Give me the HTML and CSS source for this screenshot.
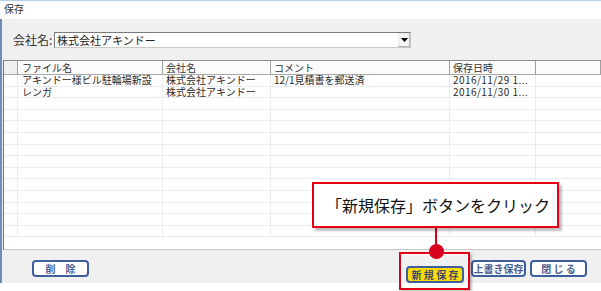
FILE: index.html
```html
<!DOCTYPE html>
<html lang="ja">
<head>
<meta charset="utf-8">
<link rel="stylesheet" href="styles.css">
</head>
<body>
<div class="titlebar">保存</div>
<div class="window">
  <div class="company">
    <span class="label">会社名:</span>
    <div class="combo">
      <span class="combo-text">株式会社アキンドー</span>
      <span class="combo-btn"><svg width="7" height="4" viewBox="0 0 7 4"><path d="M0 0H7L3.5 4Z" fill="#000"/></svg></span>
    </div>
  </div>
  <div class="grid">
    <div class="row head">
      <div class="c c0"></div><div class="c c1">ファイル名</div><div class="c c2">会社名</div><div class="c c3">コメント</div><div class="c c4">保存日時</div><div class="c c5"></div>
    </div>
    <div class="row"><div class="c c0"></div><div class="c c1">アキンドー様ビル駐輪場新設</div><div class="c c2">株式会社アキンドー</div><div class="c c3">12/1見積書を郵送済</div><div class="c c4 date">2016/11/29 1...</div><div class="c c5"></div></div>
    <div class="row"><div class="c c0"></div><div class="c c1">レンガ</div><div class="c c2">株式会社アキンドー</div><div class="c c3"></div><div class="c c4 date">2016/11/30 1...</div><div class="c c5"></div></div>
    <div class="row"><div class="c c0"></div><div class="c c1"></div><div class="c c2"></div><div class="c c3"></div><div class="c c4"></div><div class="c c5"></div></div>
    <div class="row"><div class="c c0"></div><div class="c c1"></div><div class="c c2"></div><div class="c c3"></div><div class="c c4"></div><div class="c c5"></div></div>
    <div class="row"><div class="c c0"></div><div class="c c1"></div><div class="c c2"></div><div class="c c3"></div><div class="c c4"></div><div class="c c5"></div></div>
    <div class="row"><div class="c c0"></div><div class="c c1"></div><div class="c c2"></div><div class="c c3"></div><div class="c c4"></div><div class="c c5"></div></div>
    <div class="row"><div class="c c0"></div><div class="c c1"></div><div class="c c2"></div><div class="c c3"></div><div class="c c4"></div><div class="c c5"></div></div>
    <div class="row"><div class="c c0"></div><div class="c c1"></div><div class="c c2"></div><div class="c c3"></div><div class="c c4"></div><div class="c c5"></div></div>
    <div class="row"><div class="c c0"></div><div class="c c1"></div><div class="c c2"></div><div class="c c3"></div><div class="c c4"></div><div class="c c5"></div></div>
    <div class="row"><div class="c c0"></div><div class="c c1"></div><div class="c c2"></div><div class="c c3"></div><div class="c c4"></div><div class="c c5"></div></div>
    <div class="row"><div class="c c0"></div><div class="c c1"></div><div class="c c2"></div><div class="c c3"></div><div class="c c4"></div><div class="c c5"></div></div>
    <div class="row"><div class="c c0"></div><div class="c c1"></div><div class="c c2"></div><div class="c c3"></div><div class="c c4"></div><div class="c c5"></div></div>
    <div class="row"><div class="c c0"></div><div class="c c1"></div><div class="c c2"></div><div class="c c3"></div><div class="c c4"></div><div class="c c5"></div></div>
    <div class="row"><div class="c c0"></div><div class="c c1"></div><div class="c c2"></div><div class="c c3"></div><div class="c c4"></div><div class="c c5"></div></div>
  </div>
  <div class="toolbar">
    <button class="btn btn-del">削　除</button>
    <div class="right">
      <div class="hl-wrap">
        <button class="btn btn-new">新 規 保 存</button>
        <span class="highlight"></span>
        <span class="connector"></span>
        <span class="dot"></span>
      </div>
      <button class="btn btn-over">上書き保存</button>
      <button class="btn btn-close">閉 じ る</button>
    </div>
  </div>
  <div class="callout">「新規保存」ボタンをクリック</div>
</div>
</body>
</html>
```
FILE: styles.css
```css
* { box-sizing: border-box; }
html, body { margin: 0; padding: 0; background: #fff; }
body {
  width: 601px; height: 291px; overflow: hidden;
  font-family: "Noto Sans CJK JP", "Noto Sans", sans-serif;
  color: #222;
}
.titlebar {
  height: 19px;
  border-top: 1px solid #b8d0ea;
  font-size: 10px;
  line-height: 16px;
  padding-left: 4px;
  color: #333;
  background: #fff;
}
.window {
  position: relative;
  height: 264px;
  background: #f0f0f0;
  border-left: 2px solid #6f8db5;
}
.company {
  display: flex;
  align-items: center;
  padding: 13px 0 0 11px;
  height: 29px;
}
.label {
  font-size: 12px;
  line-height: 16px;
  color: #333;
  width: 41px;
}
.combo {
  display: flex;
  width: 357px;
  height: 16px;
  background: #fff;
  border: 1px solid #7a7a7a;
  border-right-color: #c8c8c8;
  border-bottom-color: #c8c8c8;
}
.combo-text {
  flex: 1;
  font-size: 11px;
  line-height: 14px;
  padding-left: 2px;
  color: #222;
}
.combo-btn {
  width: 12px;
  height: 14px;
  display: flex;
  align-items: center;
  justify-content: center;
  background: #f4f4f4;
  border: 1px solid #b4b4b4;
  border-top-color: #e8e8e8;
  border-left-color: #e8e8e8;
}
.grid {
  margin: 12px 0 0 1px;
  height: 190px;
  background: #fff;
  border-top: 1px solid #8c8c8c;
  border-left: 1px solid #707070;
  border-bottom: 1px solid #c8c8c8;
}
.row {
  display: grid;
  grid-template-columns: 14px 145px 108px 179px 86px 1fr;
  height: 11.6px;
  border-bottom: 1px solid #ececec;
}
.row.head {
  height: 14px;
  border-bottom: 1px solid #a8a8a8;
  background: #fbfbfb;
}
.c {
  font-size: 10px;
  line-height: 10.6px;
  padding-left: 4px;
  white-space: nowrap;
  border-right: 1px solid #ececec;
  color: #2a2a2a;
}
.date { letter-spacing: 0.45px; }
.head .c {
  line-height: 13px;
  border-right: 1px solid #a0a0a0;
  color: #333;
}
.head .c0 { background: #f0f0f0; }
.c2, .c3, .c4 { padding-left: 3px; }
.c5 { border-right: none; }
.toolbar {
  display: flex;
  justify-content: space-between;
  padding: 10px 14px 0 30px;
}
.right {
  display: flex;
  gap: 4px;
}
.btn {
  height: 17px;
  margin: 0;
  padding: 0;
  font-family: "Noto Sans CJK JP", sans-serif;
  font-size: 10px;
  font-weight: 700;
  line-height: 13px;
  color: #4a6090;
  background: #fff;
  border: 2px solid #3d5f9e;
  border-radius: 4px;
}
.btn-del { width: 57px; }
.btn-new { width: 58px; background: #ffdc00; color: #3c4a70; }
.btn-over { width: 55px; letter-spacing: 0; }
.btn-close { width: 57px; }
.hl-wrap {
  position: relative;
  margin-right: 3px;
}
.highlight {
  position: absolute;
  left: -7px; top: -8px; right: -6px; bottom: -6px;
  border: 2px solid #e00018;
  box-shadow: inset 0 0 0 1px #fff, 2px 2px 2px rgba(0,0,0,0.25);
}
.connector {
  position: absolute;
  left: 29px; top: -32px;
  width: 2px; height: 24px;
  background: #d8001c;
}
.dot {
  position: absolute;
  left: 22.5px; top: -16.5px;
  width: 15px; height: 15px;
  border-radius: 50%;
  background: #d8001c;
}
.callout {
  position: absolute;
  left: 310px; top: 163px;
  width: 247px; height: 46px;
  background: #fff;
  border: 2px solid #e60012;
  box-shadow: 3px 3px 2px rgba(0,0,0,0.25);
  font-size: 16px;
  line-height: 42px;
  padding-left: 12px;
  color: #111;
  white-space: nowrap;
}
```
